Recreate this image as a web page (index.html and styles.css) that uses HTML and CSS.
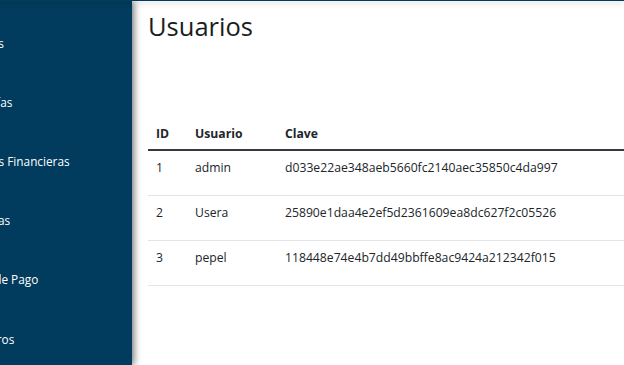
FILE: index.html
```html
<!DOCTYPE html>
<html lang="es">

<head>
    <meta charset="UTF-8">
    <meta name="viewport" content="width=device-width, initial-scale=1.0">
    <title>Usuarios</title>
    <link rel="stylesheet" href="styles.css">
</head>

<body>
    <div class="topbar"></div>
    <div class="layout">
        <aside class="sidebar">
            <nav class="menu">
                <a href="#">Empresas</a>
                <a href="#">Mercancías</a>
                <a href="#">Entidades Financieras</a>
                <a href="#">Estrategias</a>
                <a href="#">Formas de Pago</a>
                <a href="#">Parámetros</a>
            </nav>
        </aside>

        <main class="content">
            <h2 class="title">Usuarios</h2>

            <table class="table">
                <colgroup>
                    <col class="col-id">
                    <col class="col-user">
                    <col>
                </colgroup>
                <thead>
                    <tr>
                        <th>ID</th>
                        <th>Usuario</th>
                        <th>Clave</th>
                    </tr>
                </thead>
                <tbody>
                    <tr>
                        <td>1</td>
                        <td>admin</td>
                        <td>d033e22ae348aeb5660fc2140aec35850c4da997</td>
                    </tr>
                    <tr>
                        <td>2</td>
                        <td>Usera</td>
                        <td>25890e1daa4e2ef5d2361609ea8dc627f2c05526</td>
                    </tr>
                    <tr>
                        <td>3</td>
                        <td>pepel</td>
                        <td>118448e74e4b7dd49bbffe8ac9424a212342f015</td>
                    </tr>
                </tbody>
            </table>
        </main>
    </div>
</body>

</html>
```

FILE: styles.css
```css
body {
    font-family: "Segoe UI", "Open Sans", sans-serif;
    color: #212529;
    background-color: white;
    margin: 0;
    padding: 0;
}

.topbar {
    position: relative;
    z-index: 2;
    height: 1px;
    background-color: #013b5d;
    box-shadow: 0 1px 6px rgba(0, 0, 0, 0.45);
}

.layout {
    display: flex;
    height: calc(100vh - 1px);
    overflow: hidden;
}

/* sidebar */

.sidebar {
    position: relative;
    z-index: 1;
    width: 132px;
    flex-shrink: 0;
    background-color: #013b5d;
    box-shadow: 2px 0 7px rgba(0, 0, 0, 0.55);
    overflow: hidden;
}

.menu {
    padding-top: 12px;
    margin-left: -50px;
}

.menu a {
    display: block;
    padding: 20.6px 0;
    font-size: 11.8px;
    line-height: 18px;
    color: white;
    text-decoration: none;
    white-space: nowrap;
}

/* content */

.content {
    flex: 1;
    padding: 10px 0 0 16px;
    overflow: hidden;
}

.title {
    margin: 0 0 77px;
    font-size: 25.5px;
    font-weight: 500;
    line-height: 30px;
    color: #1a1d20;
}

.table {
    width: 100%;
    table-layout: fixed;
    border-collapse: collapse;
    font-size: 12.2px;
    line-height: 18px;
    text-align: left;
}

.col-id {
    width: 39px;
}

.col-user {
    width: 90px;
}

.table th {
    padding: 7px 8px 6px;
    font-weight: 700;
    border-bottom: 2px solid #343a40;
}

.table td {
    padding: 8px 8px 18px;
    border-bottom: 1px solid #e2e5e8;
    white-space: nowrap;
}
```
